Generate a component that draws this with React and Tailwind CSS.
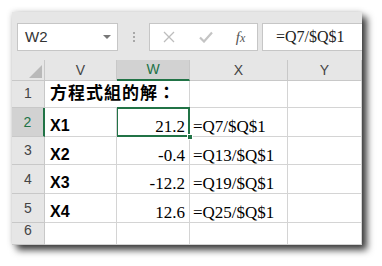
const gridLine = "border-r border-b border-[#d4d4d4]";

const rows = [
  { n: 1, h: "h-[27px]", v: "方程式組的解：", w: "", x: "" },
  { n: 2, h: "h-[29px]", v: "X1", w: "21.2", x: "=Q7/$Q$1", sel: true },
  { n: 3, h: "h-[28px]", v: "X2", w: "-0.4", x: "=Q13/$Q$1" },
  { n: 4, h: "h-[29px]", v: "X3", w: "-12.2", x: "=Q19/$Q$1" },
  { n: 5, h: "h-[29px]", v: "X4", w: "12.6", x: "=Q25/$Q$1" },
  { n: 6, h: "h-[22px]", v: "", w: "", x: "" },
];

function RowHead({ n, sel, h }) {
  return (
    <div
      className={`${h} flex items-end justify-center pb-[3px] border-b border-[#c8c8c8] text-[14px] ${
        sel
          ? "bg-[#d2d2d2] text-[#217346] border-r-2 border-r-[#217346]"
          : "bg-[#e6e6e6] text-[#444] border-r border-r-[#c8c8c8]"
      }`}
    >
      {n}
    </div>
  );
}

export default function App() {
  return (
    <div className="w-[382px] h-[266px] bg-white pl-[12px] pt-[12px] font-['Liberation_Sans',sans-serif]">
      <div className="w-[350px] h-[233px] bg-[#e6e6e6] overflow-hidden shadow-[5px_5px_7px_rgba(0,0,0,0.75),0_0_6px_rgba(0,0,0,0.18)]">
        {/* formula bar */}
        <div className="h-[48px] flex items-start pt-[11px] pl-[5px]">
          <div className="w-[101px] h-[28px] bg-white border border-[#c6c6c6] flex items-center pl-[7px] pr-[6px]">
            <span className="text-[15px] text-[#333] flex-1">W2</span>
            <span className="w-0 h-0 border-l-[4px] border-r-[4px] border-t-[4px] border-l-transparent border-r-transparent border-t-[#777]" />
          </div>
          <div className="w-[31px] h-[28px] flex flex-col items-center justify-center gap-[2px]">
            <span className="w-[2px] h-[2px] bg-[#a8a8a8]" />
            <span className="w-[2px] h-[2px] bg-[#a8a8a8]" />
            <span className="w-[2px] h-[2px] bg-[#a8a8a8]" />
          </div>
          <div className="w-[109px] h-[28px] bg-white border border-[#c6c6c6] flex items-center">
            <div className="w-[38px] flex justify-center">
              <svg width="12" height="12" viewBox="0 0 12 12">
                <path d="M1 1L11 11M11 1L1 11" stroke="#bdbdbd" strokeWidth="1.3" />
              </svg>
            </div>
            <div className="w-[36px] flex justify-center">
              <svg width="14" height="12" viewBox="0 0 14 12">
                <path d="M1 6.5L5 10.5L13 1.5" stroke="#c4c4c4" strokeWidth="2.2" fill="none" />
              </svg>
            </div>
            <div className="flex-1 flex justify-center">
              <span className="font-['Liberation_Serif',serif] italic text-[15px] text-[#555] leading-none">
                f<span className="text-[12px]">x</span>
              </span>
            </div>
          </div>
          <div className="ml-[4px] flex-1 h-[28px] bg-white border border-[#c6c6c6] border-r-0 flex items-center pl-[13px]">
            <span className="font-['Liberation_Serif',serif] text-[16px] text-[#222]">=Q7/$Q$1</span>
          </div>
        </div>

        {/* sheet */}
        <div className="grid grid-cols-[33px_72px_73px_98px_1fr] bg-white">
          {/* header row */}
          <div className="h-[21px] bg-[#e6e6e6] border-r border-b border-[#c8c8c8] flex items-end justify-end p-[2px]">
            <svg width="13" height="13" viewBox="0 0 13 13">
              <path d="M13 0L13 13L0 13Z" fill="#b9b9b9" />
            </svg>
          </div>
          <div className="h-[21px] bg-[#e6e6e6] border-r border-b border-[#c8c8c8] flex items-center justify-center text-[14px] text-[#444]">V</div>
          <div className="h-[21px] bg-[#d2d2d2] border-r border-r-[#c8c8c8] border-b-2 border-b-[#217346] flex items-center justify-center text-[14px] text-[#217346]">W</div>
          <div className="h-[21px] bg-[#e6e6e6] border-r border-b border-[#c8c8c8] flex items-center justify-center text-[14px] text-[#444]">X</div>
          <div className="h-[21px] bg-[#e6e6e6] border-r border-b border-[#c8c8c8] flex items-center justify-center text-[14px] text-[#444]">Y</div>

          {rows.map((r) => (
            <div key={r.n} className="contents">
              <RowHead n={r.n} sel={r.sel} h={r.h} />
              <div
                className={`${r.h} flex items-start pl-[5px] whitespace-nowrap relative z-10 font-bold text-black border-b border-[#d4d4d4] font-['Liberation_Sans','Noto_Sans_CJK_TC',sans-serif] ${
                  r.n === 1 ? "pt-[3px] text-[17px] tracking-[1px] leading-[20px]" : "border-r pt-[6px] text-[16px]"
                }`}
              >
                {r.v}
              </div>
              <div className={`${r.h} ${gridLine} relative flex items-start justify-end pt-[6px] pr-[4px] font-['Liberation_Serif',serif] text-[17px] text-black`}>
                {r.w}
                {r.sel && (
                  <>
                    <span className="absolute left-[-1px] top-[-1px] right-[-1px] bottom-[-1px] border-2 border-[#217346]" />
                    <span className="absolute right-[-4px] bottom-[-4px] w-[6px] h-[6px] bg-[#217346] border border-white z-20" />
                  </>
                )}
              </div>
              <div className={`${r.h} ${gridLine} flex items-start pt-[6px] pl-[3px] font-['Liberation_Serif',serif] text-[17px] text-black whitespace-nowrap`}>
                {r.x}
              </div>
              <div className={`${r.h} ${gridLine}`} />
            </div>
          ))}
        </div>
      </div>
    </div>
  );
}
